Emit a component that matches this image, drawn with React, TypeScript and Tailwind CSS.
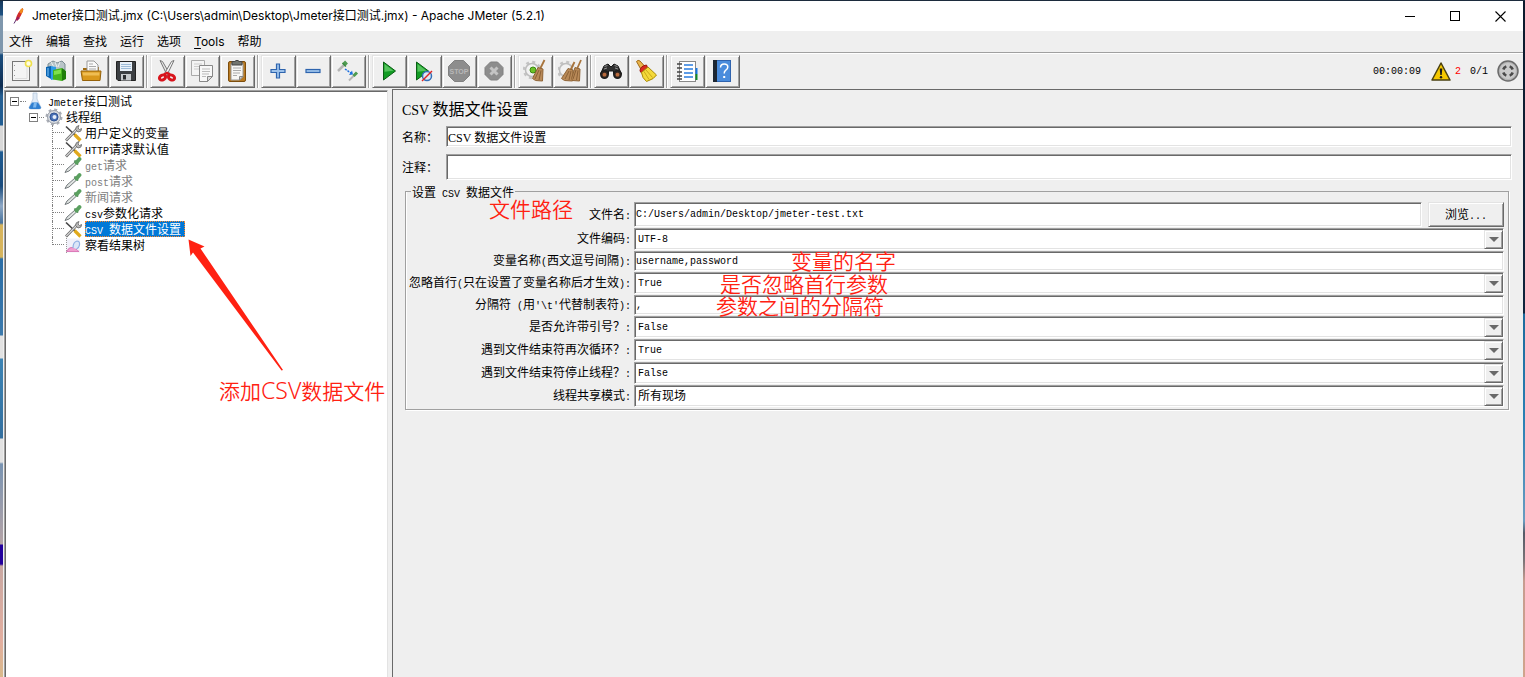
import React from "react";

const RAISED =
  "border border-t-[#e3e3e3] border-l-[#e3e3e3] border-b-[#696969] border-r-[#696969] bg-[#efefef] shadow-[inset_1px_1px_0_#ffffff,inset_-1px_-1px_0_#a0a0a0]";
const SUNKEN =
  "border border-t-[#a0a0a0] border-l-[#a0a0a0] border-b-white border-r-white bg-white shadow-[inset_1px_1px_0_#696969,inset_-1px_-1px_0_#e3e3e3] outline-none";
const MONO = "font-['Liberation_Mono','Noto_Sans_CJK_SC',monospace] text-[10px]";
const SONG = "font-['Liberation_Serif','Noto_Sans_CJK_SC',serif] text-[12px]";

const LATIN = {
  form: "font-['Liberation_Mono',monospace] text-[10px] whitespace-pre",
  heading: "font-['Liberation_Serif',serif] text-[14px] whitespace-pre",
  chrome: "font-['Inter',sans-serif] text-[12px] whitespace-pre",
};

/* Half-width characters are set in their own face beside full-width CJK. */
function Mixed({ text, face = "form" }: { text: string; face?: keyof typeof LATIN }) {
  return (
    <>
      {text
        .split(/([\x20-\x7e]+)/)
        .filter(Boolean)
        .map((part, i) => (
          <span key={i} className={/^[\x20-\x7e]/.test(part) ? LATIN[face] : undefined}>
            {part}
          </span>
        ))}
    </>
  );
}

/* ---------- toolbar icons, 24 x 24 ---------- */

const icons: Record<string, React.ReactNode> = {
  new: (
    <>
      <rect x="3.5" y="2.5" width="17" height="19" fill="#f4f4f4" stroke="#777" />
      <path d="M6 19.5h12V8" fill="none" stroke="#ddd" />
      <path d="M5.5 6v1M5.5 11v1M5.5 16v1" stroke="#999" />
      <circle cx="19.5" cy="4.5" r="3" fill="#fffde0" stroke="#efe04a" strokeWidth="1.6" />
    </>
  ),
  templates: (
    <>
      <path d="M4 5l5-3 4 2 5-2 3 3v6H4z" fill="#b8c4c8" stroke="#7b8c92" />
      <path d="M7 3l3 5M11 3l2 5M16 3l-2 5" stroke="#e9eff1" />
      <path d="M2 8l5-1v13l-5-3z" fill="#0a63b0" />
      <path d="M7 7l5 1v12l-5 1z" fill="#2d9be8" />
      <path d="M4 9v8" stroke="#7cc8ff" />
      <path d="M9 11l9-2v13l-9-1.500z" fill="#45b51e" />
      <path d="M18 9l4 3v8l-4 2z" fill="#1f7d0b" />
      <path d="M10 12l7-1.500v4l-7 1.500z" fill="#7fe04a" />
    </>
  ),
  open: (
    <>
      <path d="M4 11V9h4l1-1h11v4z" fill="#a06a10" />
      <path d="M8 2h7l4 4v7H8z" fill="#fafafa" stroke="#999" />
      <path d="M10 5h4M10 7.500h7M10 10h7" stroke="#aaa" />
      <path d="M2 12h20l-1 9.500H3.500z" fill="#d9981c" stroke="#96620a" />
      <path d="M3.500 13.500h17l-.3 3H4z" fill="#efbd53" />
    </>
  ),
  save: (
    <>
      <path d="M2.500 2.500h19v19H4l-1.500-1.500z" fill="#3c3f43" stroke="#222" />
      <rect x="6" y="3" width="12" height="9" fill="#e9f1f9" />
      <path d="M7 5.500h10M7 7.500h10M7 9.500h10" stroke="#9dbbd8" />
      <rect x="7" y="15" width="10" height="6.500" fill="#c6c9cc" />
      <rect x="9" y="16" width="3" height="4.500" fill="#2b2d30" />
    </>
  ),
  cut: (
    <>
      <path d="M5 1.500l2.500 1 7 12-2 2.500z" fill="#e4e4e4" stroke="#777" />
      <path d="M19 1.500l-2.500 1-7 12 2 2.500z" fill="#f6f6f6" stroke="#777" />
      <ellipse cx="7.500" cy="18.500" rx="3.200" ry="2.400" fill="none" stroke="#d8141c" strokeWidth="3" transform="rotate(-25 7.500 18.500)" />
      <ellipse cx="16.500" cy="18.500" rx="3.200" ry="2.400" fill="none" stroke="#d8141c" strokeWidth="3" transform="rotate(25 16.500 18.500)" />
      <path d="M9 15.500l3-1.500 3 1.500" fill="none" stroke="#d8141c" strokeWidth="2.500" />
    </>
  ),
  copy: (
    <>
      <path d="M1.500 1.500h13v15h-13z" fill="#f4f4f4" stroke="#aaa" />
      <path d="M4 5h8M4 7.500h8M4 10h5" stroke="#ccc" />
      <path d="M9.500 6.500h13v11l-5 5h-8z" fill="#f8f8f8" stroke="#888" />
      <path d="M22.500 17.500h-5v5z" fill="#ddd" stroke="#888" />
      <path d="M12 10h8M12 12.500h8M12 15h7M12 17.500h4" stroke="#bbb" />
    </>
  ),
  paste: (
    <>
      <rect x="3.500" y="2.500" width="17" height="20" rx="1.500" fill="#b87a22" stroke="#7d4d0c" />
      <path d="M6 4.500h12v13l-3.500 3.500H6z" fill="#f7f7f5" stroke="#999" />
      <path d="M18 17.500h-3.500V21z" fill="#d0d0d0" stroke="#888" />
      <path d="M8 9h8M8 11.500h8M8 14h7M8 16.500h4" stroke="#aaa" />
      <path d="M7 2.500h2.500Q12 0 14.500 2.500H17v3.500H7z" fill="#72756f" stroke="#444" />
    </>
  ),
  plus: <path d="M10.500 5h3v5.500H19v3h-5.500V19h-3v-5.500H5v-3h5.500z" fill="#9cc1ea" stroke="#2e64ae" strokeWidth="1.200" />,
  minus: <rect x="5" y="10.500" width="14" height="3" fill="#9cc1ea" stroke="#2e64ae" strokeWidth="1.200" />,
  toggle: (
    <>
      <path d="M2 12l6-6" stroke="#b5b5b5" strokeWidth="2.500" />
      <path d="M7.500 6l3-3" stroke="#4f9a52" strokeWidth="4" />
      <path d="M6.500 4l3.500 3.500" stroke="#3d8b41" strokeWidth="1.300" />
      <path d="M9 10l6 4" stroke="#1b6fe0" strokeWidth="1.500" strokeDasharray="2 1" />
      <path d="M13 16l4-.500-1-4z" fill="#1b6fe0" />
      <path d="M13 21.500l5-5" stroke="#b5b5b5" strokeWidth="2" />
      <path d="M17.500 17l3.500-3.500" stroke="#4c9a50" strokeWidth="3" />
    </>
  ),
  start: (
    <>
      <path d="M6.500 3l12 9-12 9z" fill="#129c24" stroke="#0a5f14" />
      <path d="M7.500 5l9 6.700-9 1z" fill="#54c35c" />
    </>
  ),
  startNoPause: (
    <>
      <path d="M4.500 3l12 9-12 9z" fill="#129c24" stroke="#0a5f14" />
      <path d="M5.500 5l9 6.700-9 1z" fill="#54c35c" />
      <circle cx="15" cy="17" r="4.500" fill="#dce8f6" stroke="#336fb8" strokeWidth="1.500" />
      <path d="M10 22L20 12" stroke="#e02424" strokeWidth="1.500" />
    </>
  ),
  stop: (
    <>
      <path d="M7.500 1.500h9l6 6v9l-6 6h-9l-6-6v-9z" fill="#8d8d8d" stroke="#808080" />
      <text x="12" y="14.500" textAnchor="middle" fontSize="7" fontWeight="700" fontFamily="Liberation Sans" fill="#b8b8b8">
        STOP
      </text>
    </>
  ),
  shutdown: (
    <>
      <path d="M8.500 3h7l5.500 5.500v7L15.500 21h-7L3 15.500v-7z" fill="#8d8d8d" stroke="#808080" />
      <path d="M8.500 8.500l7 7M15.500 8.500l-7 7" stroke="#c4c4c4" strokeWidth="3" />
    </>
  ),
  clear: (
    <>
      <circle cx="9" cy="11" r="8" fill="none" stroke="#c4c4c4" strokeWidth="2.500" strokeDasharray="3 3.280" />
      <circle cx="9" cy="11" r="6.500" fill="#f2f2f2" stroke="#bdbdbd" strokeWidth="1.500" />
      <circle cx="10" cy="11" r="3" fill="#6cc228" stroke="#3b8a10" />
      <path d="M21.500 1L17 10" stroke="#a8743c" strokeWidth="1.800" />
      <path d="M15 8.500l5 1.500-.500 12-7-.500-3-2z" fill="#b98a58" stroke="#8f6436" />
      <path d="M16 11l-4 9M18 11.500l-2 9.500" stroke="#8b6137" />
    </>
  ),
  clearAll: (
    <>
      <circle cx="8" cy="11" r="8" fill="none" stroke="#c4c4c4" strokeWidth="2.500" strokeDasharray="3 3.280" />
      <circle cx="8" cy="11" r="6.500" fill="#f2f2f2" stroke="#bdbdbd" strokeWidth="1.500" />
      <path d="M16.500 3l-4 8M23 1l-4 9" stroke="#a8743c" strokeWidth="1.800" />
      <path d="M10 9.500l5 1.500-.500 11-8-.500-3-2z" fill="#b98a58" stroke="#8f6436" />
      <path d="M17 8.500l5 1.500-.500 12-7-.500-1-2z" fill="#b98a58" stroke="#8f6436" />
      <path d="M11 12l-4 8M13 12l-2 9M18 11l-3 9M20 11.500l-1.500 9.500" stroke="#8b6137" />
    </>
  ),
  search: (
    <>
      <path d="M5 7l4-2 3 3 3-3 4 2 3.500 8h-8V12h-5v3H1.500z" fill="#303030" stroke="#181818" />
      <path d="M5.500 7.500l3-1M15.500 6.500l3 1M5 10l3-1M16 9l3 1" stroke="#909090" />
      <circle cx="5.500" cy="15.500" r="3.700" fill="#3a2a22" stroke="#1c1c1c" strokeWidth="1.500" />
      <circle cx="18.500" cy="15.500" r="3.700" fill="#3a2a22" stroke="#1c1c1c" strokeWidth="1.500" />
      <circle cx="5.500" cy="15.700" r="1.900" fill="#b86a3c" />
      <circle cx="18.500" cy="15.700" r="1.900" fill="#b86a3c" />
    </>
  ),
  searchReset: (
    <>
      <path d="M2.500 2.500Q4 .5 6 2l4.500 5-3.500 3.500z" fill="#eab54b" stroke="#a06a18" />
      <path d="M6 12q0-5 6.500-6l1 2.500L7.500 14z" fill="#d92b1f" stroke="#9c150c" />
      <path d="M7.500 13.500l6.500-5.500 8.500 8q-2 4-10 6.500Q8 19 7.500 13.500z" fill="#f4d93a" stroke="#a98a0c" />
      <path d="M10 12.500l5 8M12 11l6.500 7.500" stroke="#c9a91c" />
    </>
  ),
  functions: (
    <>
      <rect x="4.500" y="2.500" width="16" height="20" fill="#fff" stroke="#888" />
      <path d="M20.500 9h2v6h-2z" fill="#1675e0" />
      <path d="M20.500 15h2v6h-2z" fill="#128a2a" />
      <path d="M9 6h9M9 10h9M9 14h9M9 18h9" stroke="#2b7de0" strokeWidth="1.400" />
      <path d="M2 5h5M2 9h5M2 13h5M2 17h5M2 20h5" stroke="#444" strokeWidth="1.500" />
    </>
  ),
  help: (
    <>
      <rect x="3.500" y="1.500" width="17" height="21" fill="#4a8cdc" stroke="#2f63ae" />
      <rect x="3" y="1" width="4" height="22" fill="#1d2733" />
      <path d="M10.500 8.500q.2-3.500 3.700-3.500t3.600 3q0 2-2.200 3.300-1.400 1-1.400 3.200" fill="none" stroke="#fff" strokeWidth="1.500" />
      <rect x="13.200" y="17" width="2" height="2" fill="#fff" />
    </>
  ),
};

function ToolButton({ icon, label, disabled }: { icon: string; label: string; disabled?: boolean }) {
  return (
    <button type="button" aria-label={label} disabled={disabled} className={`flex h-[33px] w-[35px] items-center justify-center pr-px ${RAISED}`}>
      <svg viewBox="0 0 24 24" className="size-6" aria-hidden="true">
        {icons[icon]}
      </svg>
    </button>
  );
}

const toolGroups: { icon: string; label: string; disabled?: boolean }[][] = [
  [
    { icon: "new", label: "新建" },
    { icon: "templates", label: "模板" },
    { icon: "open", label: "打开" },
    { icon: "save", label: "保存" },
  ],
  [
    { icon: "cut", label: "剪切" },
    { icon: "copy", label: "复制" },
    { icon: "paste", label: "粘贴" },
  ],
  [
    { icon: "plus", label: "展开" },
    { icon: "minus", label: "收起" },
    { icon: "toggle", label: "切换" },
  ],
  [
    { icon: "start", label: "启动" },
    { icon: "startNoPause", label: "不停顿启动" },
    { icon: "stop", label: "停止", disabled: true },
    { icon: "shutdown", label: "关闭", disabled: true },
  ],
  [
    { icon: "clear", label: "清除" },
    { icon: "clearAll", label: "清除全部" },
  ],
  [
    { icon: "search", label: "查找" },
    { icon: "searchReset", label: "重置查找" },
  ],
  [
    { icon: "functions", label: "函数助手" },
    { icon: "help", label: "帮助" },
  ],
];

/* ---------- tree ---------- */

const treeIcons: Record<string, React.ReactNode> = {
  flask: (
    <>
      <path d="M6 1h4v6l4 8.500q0 1.500-2 1.500H4q-2 0-2-1.500L6 7z" fill="#dfeaf6" stroke="#b5c8dc" strokeWidth=".8" />
      <path d="M5 10.500h6l3 5q0 1.500-2 1.500H4q-2 0-2-1.500z" fill="#2f7fd0" />
      <path d="M7 10.500h3l-1 5H6z" fill="#7db8ee" />
    </>
  ),
  gear: (
    <>
      <circle cx="9" cy="9" r="7.300" fill="none" stroke="#a9adb5" strokeWidth="2.400" strokeDasharray="2.900 2.830" />
      <circle cx="9" cy="9" r="6.500" fill="#d5d9df" stroke="#9ba0a9" />
      <circle cx="9" cy="9" r="4" fill="#4a72b8" stroke="#2f5292" />
      <circle cx="9.500" cy="9" r="2" fill="#e6eef9" />
    </>
  ),
  tools: (
    <>
      <path d="M2 2.500l9 8.500" stroke="#444" strokeWidth="1.600" />
      <path d="M10.500 10.500l6 6" stroke="#e0a91c" strokeWidth="3.200" />
      <path d="M2 16.500L13 5" stroke="#666" strokeWidth="2.600" />
      <path d="M2.300 16.200L13 5" stroke="#dcdcdc" strokeWidth="1.200" />
      <path d="M11.500 5.500q0-3.500 3.500-4l-1 2.500 1.500 1.500 2.200-1q0 3.500-3.700 3.500z" fill="#b8b8b8" stroke="#666" strokeWidth=".8" />
    </>
  ),
  dropper: (
    <>
      <path d="M1 16.500l2-3.500L11 6l1.800 1.800L5 15z" fill="#dfe3e1" stroke="#73797c" strokeWidth="1" />
      <path d="M10.500 4.500l3.500 4" stroke="#3d7a45" strokeWidth="1.800" />
      <path d="M12.500 6.500L15.500 3" stroke="#5aa05f" strokeWidth="3.800" strokeLinecap="round" />
    </>
  ),
  result: (
    <>
      <rect x="2.500" y="2.500" width="13.500" height="14" fill="#f1f1fa" />
      <path d="M2.500 2v15" stroke="#999" strokeDasharray="1 1" />
      <path d="M2.500 15.500q3-5 5.500-4 2 0 4 1.500 2 2 3 2.500z" fill="#f09fd0" stroke="#d768ad" strokeWidth=".8" />
      <path d="M9 12q0-6 4-7 3 0 2.500 4-.5 3-3 4" fill="#dce6f8" stroke="#8fb0e4" strokeWidth="1.200" />
    </>
  ),
};

function TreeIcon({ name }: { name: string }) {
  return (
    <svg viewBox="0 0 18 18" className="relative size-[18px] shrink-0" aria-hidden="true">
      {treeIcons[name]}
    </svg>
  );
}

function Expander() {
  return (
    <button type="button" aria-label="收起" className="flex size-[9px] shrink-0 items-center justify-center border border-[#808080] bg-white">
      <span className="h-px w-[5px] bg-black" />
    </button>
  );
}

const leaves = [
  { icon: "tools", text: "用户定义的变量" },
  { icon: "tools", text: "HTTP请求默认值" },
  { icon: "dropper", text: "get请求", off: true },
  { icon: "dropper", text: "post请求", off: true },
  { icon: "dropper", text: "新闻请求", off: true },
  { icon: "dropper", text: "csv参数化请求" },
  { icon: "tools", text: "CSV 数据文件设置", selected: true },
  { icon: "result", text: "察看结果树" },
];

function Tree() {
  return (
    <ul className="pt-px leading-[18px] whitespace-nowrap">
      <li>
        <div className="flex h-4 items-center pl-1">
          <Expander />
          <span className="mx-px w-[6px] border-t border-dotted border-[#808080]" />
          <TreeIcon name="flask" />
          <span className="ml-[3px] h-4">
            <Mixed text="Jmeter接口测试" />
          </span>
        </div>
        <ul>
          <li>
            <div className="flex h-4 items-center pl-[23px]">
              <Expander />
              <span className="mx-px w-[5px] border-t border-dotted border-[#808080]" />
              <TreeIcon name="gear" />
              <span className="ml-[3px] h-4">线程组</span>
            </div>
            <ul>
              {leaves.map((leaf, i) => {
                const last = i === leaves.length - 1;
                return (
                  <li key={leaf.text} className="flex h-4 items-center pl-[46px]">
                    <span className={`h-4 w-3 shrink-0 border-dotted border-[#808080] ${last ? "" : "border-l"}`}>
                      <span className={`block h-2 border-b border-dotted border-[#808080] ${last ? "border-l" : ""}`} />
                    </span>
                    <TreeIcon name={leaf.icon} />
                    <span
                      className={`ml-[3px] h-4 ${
                        leaf.selected
                          ? "bg-[#0078d7] pr-1 text-white outline-1 -outline-offset-1 outline-dotted outline-[#ff8728]"
                          : leaf.off
                            ? "text-[#808080]"
                            : ""
                      }`}
                    >
                      <Mixed text={leaf.text} />
                    </span>
                  </li>
                );
              })}
            </ul>
          </li>
        </ul>
      </li>
    </ul>
  );
}

/* ---------- CSV form ---------- */

type Field = { id: string; label: string; value: string; kind: "text" | "select" };

const fields: Field[] = [
  { id: "encoding", label: "文件编码:", value: "UTF-8", kind: "select" },
  { id: "variables", label: "变量名称(西文逗号间隔):", value: "username,password", kind: "text" },
  { id: "ignoreFirst", label: "忽略首行(只在设置了变量名称后才生效):", value: "True", kind: "select" },
  { id: "delimiter", label: "分隔符 (用'\\t'代替制表符):", value: ",", kind: "text" },
  { id: "quoted", label: "是否允许带引号？:", value: "False", kind: "select" },
  { id: "recycle", label: "遇到文件结束符再次循环？:", value: "True", kind: "select" },
  { id: "stopThread", label: "遇到文件结束符停止线程？:", value: "False", kind: "select" },
  { id: "shareMode", label: "线程共享模式:", value: "所有现场", kind: "select" },
];

function SelectBox({ id, value }: { id: string; value: string }) {
  const font = /^[\x20-\x7e]+$/.test(value) ? MONO : SONG;
  return (
    <div className="relative">
      <select id={id} defaultValue={value} className={`block h-[22px] w-full appearance-none pl-[3px] text-black ${font} ${SUNKEN}`}>
        <option>{value}</option>
      </select>
      <span className={`pointer-events-none absolute top-[2px] right-[1px] flex h-[19px] w-[19px] items-center justify-center ${RAISED}`}>
        <svg viewBox="0 0 10 5" className="h-[5px] w-[10px]" aria-hidden="true">
          <path d="M0 0h10L5 5z" fill="#696969" />
        </svg>
      </span>
    </div>
  );
}

const LABEL = "self-center pt-[2px] text-right leading-4 whitespace-nowrap";

function FieldRow({ field }: { field: Field }) {
  return (
    <div className={`grid grid-cols-[222px_1fr] gap-x-[3px] pt-px ${field.kind === "select" ? "h-[23px]" : "h-[21px]"}`}>
      <label htmlFor={field.id} className={LABEL}>
        <Mixed text={field.label} />
      </label>
      {field.kind === "select" ? (
        <SelectBox id={field.id} value={field.value} />
      ) : (
        <input id={field.id} defaultValue={field.value} className={`h-5 w-full pl-px ${MONO} ${SUNKEN}`} />
      )}
    </div>
  );
}

const NOTE =
  "pointer-events-none absolute font-['Noto_Sans_CJK_SC',sans-serif] text-[21px] leading-6 font-[350] whitespace-nowrap text-[#ff2112]";

export default function App() {
  return (
    <div className="flex min-h-screen bg-[#1c2b3d] pt-px text-[12px] text-black font-['Liberation_Serif','Noto_Sans_CJK_SC',sans-serif]">
      <div className="w-[3px] shrink-0 bg-[linear-gradient(180deg,#18395c_0px,#1f5384_14px,#7f97ad_15px,#7f97ad_52px,#1c4f80_54px,#0e2c50_85px,#265f92_95px,#1f5c92_124px,#d8d8d8_125px,#d8d8d8_149px,#1f5c92_151px,#1a4b7c_185px,#8fa9c6_205px,#47729c_222px,#d7b45c_224px,#d7b45c_256px,#2b6ea6_258px,#3b79ac_334px,#e2e2e2_335px,#e2e2e2_357px,#3c84b4_358px,#336f9f_437px,#e2e2e2_438px,#e2e2e2_461px,#7994b2_463px,#b4a3a6_543px,#22009c_544px,#22009c_563px,#c9a8a2_565px,#e2ae9f_640px,#d8b98a_676px)]" />

      <div className="relative flex min-w-0 flex-1 flex-col bg-[#efefef]">
        <header className="flex h-[30px] items-center bg-white pr-[17px] pl-[9px]">
          <svg viewBox="0 0 14 18" className="h-[18px] w-[14px]" aria-hidden="true">
            <path d="M10.500 1q1.500 1 .3 3.500-1.500 4.500-5.300 9l-2-.5Q5 5.500 10.500 1z" fill="#d22b2b" />
            <path d="M10.500 1q1.500 1 .3 3.500L9.500 7 7 5q1.500-3 3.500-4z" fill="#f08a1c" />
            <path d="M5.500 9.500L8 11l-2.500 2.500-2-.5z" fill="#9a1d5c" />
            <path d="M4 13l-2 3.500" stroke="#5b2a6b" strokeWidth="1" />
          </svg>
          <h1 className="ml-[6px] leading-4 whitespace-nowrap">
            <Mixed face="chrome" text="Jmeter接口测试.jmx (C:\Users\admin\Desktop\Jmeter接口测试.jmx) - Apache JMeter (5.2.1)" />
          </h1>
          <div className="ml-auto flex items-center gap-[34px]">
            <button type="button" aria-label="最小化">
              <svg viewBox="0 0 11 11" className="size-[11px]"><path d="M0 5.500h10" stroke="#000" /></svg>
            </button>
            <button type="button" aria-label="最大化">
              <svg viewBox="0 0 11 11" className="size-[11px]"><rect x=".5" y=".5" width="9" height="9" fill="none" stroke="#000" /></svg>
            </button>
            <button type="button" aria-label="关闭窗口">
              <svg viewBox="0 0 11 11" className="size-[11px]"><path d="M.5.5l10 10M10.500.5l-10 10" stroke="#000" strokeWidth="1.100" /></svg>
            </button>
          </div>
        </header>

        <nav className="flex h-[21px] items-center gap-[13px] pl-[6px] leading-4">
          <button type="button">文件</button>
          <button type="button">编辑</button>
          <button type="button">查找</button>
          <button type="button">运行</button>
          <button type="button">选项</button>
          <button type="button" className="font-['Inter',sans-serif]">
            <span className="underline underline-offset-2">T</span>ools
          </button>
          <button type="button">帮助</button>
        </nav>

        <div className="flex h-[37px] items-center border-t border-[#a0a0a0] pr-1 pl-px shadow-[inset_0_1px_0_#ffffff]">
          <div className="flex">
            {toolGroups.map((group, g) => (
              <div key={g} className="flex">
                {g > 0 && (
                  <span className="flex w-[6px] justify-center">
                    <span className="w-[2px] border-r border-l border-r-white border-l-[#a0a0a0]" />
                  </span>
                )}
                {group.map((tool) => (
                  <ToolButton key={tool.icon} {...tool} />
                ))}
              </div>
            ))}
          </div>
          <div className="ml-auto flex items-center font-['Liberation_Mono',monospace] text-[10px]">
            <span>00:00:09</span>
            <svg viewBox="0 0 20 19" className="mr-1 ml-[10px] h-[19px] w-5" aria-hidden="true">
              <path d="M10 1l9 17H1z" fill="#f5c800" stroke="#4a4010" strokeWidth="1.500" strokeLinejoin="round" />
              <path d="M8.700 6.500h2.600L10.700 13H9.300z" fill="#1a1a1a" />
              <circle cx="10" cy="15.200" r="1.200" fill="#1a1a1a" />
            </svg>
            <span className="text-[#ff0000]">2</span>
            <span className="mx-[9px]">0/1</span>
            <svg viewBox="0 0 22 22" className="size-[22px]" aria-hidden="true">
              <circle cx="11" cy="11" r="10" fill="#b4b4b4" stroke="#6b6b6b" strokeWidth="1.500" />
              <circle cx="11" cy="11" r="8" fill="#cacaca" />
              <path d="M6.300 9.500Q7 7.300 9.300 6.400M12.700 6.400Q15 7.300 15.700 9.500M15.700 12.500Q15 14.700 12.700 15.600M9.300 15.600Q7 14.700 6.300 12.500" fill="none" stroke="#4a4a4a" strokeWidth="2.600" />
            </svg>
          </div>
        </div>

        <div className="flex flex-1">
          <aside className="mt-px ml-px w-[384px] shrink-0 border-t border-r border-l border-t-[#a0a0a0] border-r-[#e3e3e3] border-l-[#a0a0a0] bg-white pt-px pl-px shadow-[inset_1px_1px_0_#696969]">
            <Tree />
          </aside>

          <main className="ml-1 min-w-0 flex-1 border-t border-l border-[#696969] pl-[9px]">
            <h2 className="mt-[10px] text-[16px] leading-5">
              <Mixed text="CSV 数据文件设置" face="heading" />
            </h2>
            <div className="mt-[5px] mr-[11px] flex items-center leading-4">
              <label htmlFor="name" className="w-11 shrink-0 pt-[2px]">名称：</label>
              <input id="name" defaultValue="CSV 数据文件设置" className={`h-[21px] min-w-0 flex-1 pl-px ${SONG} ${SUNKEN}`} />
            </div>
            <div className="mt-[7px] mr-[11px] flex items-center leading-4">
              <label htmlFor="comment" className="w-11 shrink-0 pt-[2px]">注释：</label>
              <input id="comment" className={`h-[26px] min-w-0 flex-1 pl-px ${SONG} ${SUNKEN}`} />
            </div>

            <fieldset className="mt-[4px] mr-[14px] ml-[3px] min-w-0 border border-[#a0a0a0] pt-1 pr-1 pb-[2px] pl-[3px] shadow-[1px_1px_0_#ffffff,inset_1px_0_0_#ffffff]">
              <legend className="ml-[2px] h-[14px] px-px leading-[18px]">
                <Mixed text="设置 CSV 数据文件" />
              </legend>
              <div className="grid grid-cols-[222px_1fr_76px] gap-x-[3px]">
                <label htmlFor="filename" className={LABEL}>
                  <Mixed text="文件名:" />
                </label>
                <input id="filename" defaultValue="C:/Users/admin/Desktop/jmeter-test.txt" className={`mr-[3px] h-[25px] min-w-0 pl-px ${MONO} ${SUNKEN}`} />
                <button type="button" className={`h-[25px] ${RAISED}`}>
                  <Mixed text="浏览..." />
                </button>
              </div>
              {fields.map((field) => (
                <FieldRow key={field.id} field={field} />
              ))}
            </fieldset>
          </main>
        </div>

        {/* red notes laid over the window */}
        <svg viewBox="0 0 96 132" className="pointer-events-none absolute top-[238px] left-[185px] h-[132px] w-24" aria-hidden="true">
          <path d="M.5.5L16.500 7.500 12.500 9.500 95 131 93.500 131.500 5 13.500 2.500 17z" fill="#ff2112" />
        </svg>
        <p className={`${NOTE} top-[377px] left-[216px]`}>
          添加<span className="font-['Noto_Sans',sans-serif] text-[23px]">CSV</span>数据文件
        </p>
        <p className={`${NOTE} top-[195px] left-[486px]`}>文件路径</p>
        <p className={`${NOTE} top-[247px] left-[788px]`}>变量的名字</p>
        <p className={`${NOTE} top-[270px] left-[717px]`}>是否忽略首行参数</p>
        <p className={`${NOTE} top-[292px] left-[713px]`}>参数之间的分隔符</p>
      </div>

      <div className="w-[2px] shrink-0 bg-[linear-gradient(180deg,#0c1a2c_0px,#10243c_312px,#1c6a9c_313px,#2b80b4_420px,#6a9cc0_520px,#555a66_532px,#7c7478_560px,#c79c90_580px,#d0a48c_676px)]" />
    </div>
  );
}
